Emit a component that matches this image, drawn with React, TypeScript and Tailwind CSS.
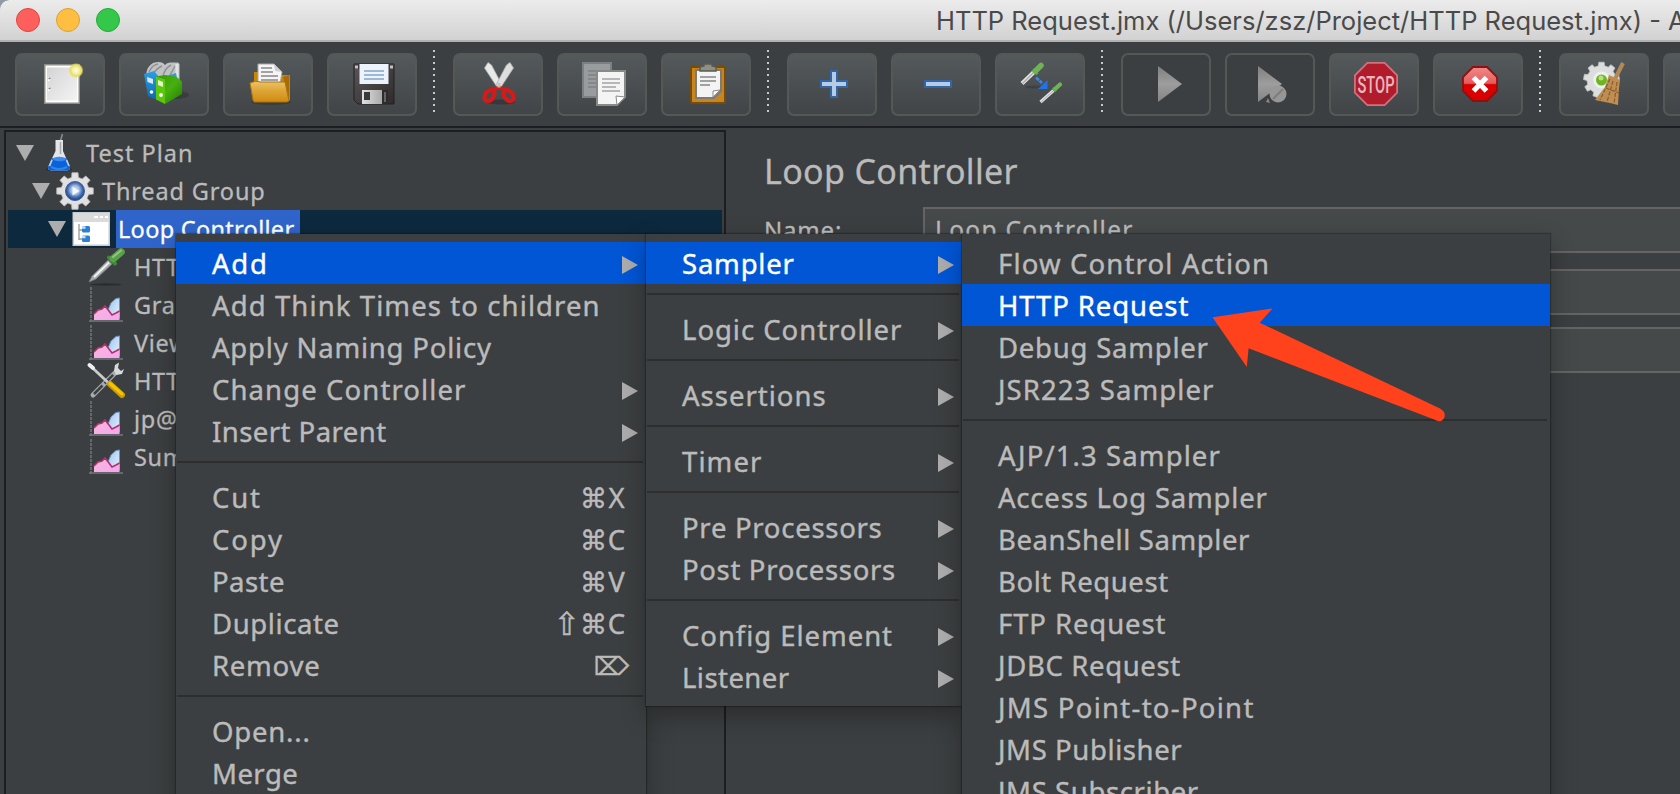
import type { ReactNode } from 'react';

const Svg = ({ s, children }: { s: number; children: ReactNode }) => (
  <svg width={s} height={s} viewBox={`0 0 ${s} ${s}`} className="block shrink-0 overflow-visible">
    {children}
  </svg>
);

/* ---------- gradients shared by the icons ---------- */
const Defs = () => (
  <svg width="0" height="0" className="absolute">
    <defs>
      <linearGradient id="page" x1="0" y1="0" x2="1" y2="1">
        <stop offset="0" stopColor="#d4d4d4" />
        <stop offset="1" stopColor="#f4f4f4" />
      </linearGradient>
      <radialGradient id="glow">
        <stop offset="0" stopColor="#fffef0" />
        <stop offset="0.5" stopColor="#f3ec9a" />
        <stop offset="0.75" stopColor="#e8df5a" />
        <stop offset="1" stopColor="#e8df5a" stopOpacity="0.1" />
      </radialGradient>
      <linearGradient id="folder" x1="0" y1="0" x2="0" y2="1">
        <stop offset="0" stopColor="#ecc46a" />
        <stop offset="0.45" stopColor="#dda637" />
        <stop offset="1" stopColor="#d08a0c" />
      </linearGradient>
      <linearGradient id="blueBook" x1="0" y1="0" x2="0" y2="1">
        <stop offset="0" stopColor="#2b9fe6" />
        <stop offset="1" stopColor="#0b68b4" />
      </linearGradient>
      <linearGradient id="greenBook" x1="0" y1="0" x2="1" y2="1">
        <stop offset="0" stopColor="#2f9a05" />
        <stop offset="0.5" stopColor="#48b010" />
        <stop offset="1" stopColor="#1f7a02" />
      </linearGradient>
      <linearGradient id="gray" x1="0" y1="0" x2="0" y2="1">
        <stop offset="0" stopColor="#7f7f7f" />
        <stop offset="0.5" stopColor="#9d9d9d" />
        <stop offset="1" stopColor="#858585" />
      </linearGradient>
      <linearGradient id="disk" x1="0" y1="0" x2="1" y2="1">
        <stop offset="0" stopColor="#5a5556" />
        <stop offset="1" stopColor="#2f2b2d" />
      </linearGradient>
      <linearGradient id="metal" x1="0" y1="0" x2="1" y2="0">
        <stop offset="0" stopColor="#e0e0e0" />
        <stop offset="1" stopColor="#a9a9a9" />
      </linearGradient>
      <linearGradient id="redX" x1="0" y1="0" x2="0" y2="1">
        <stop offset="0" stopColor="#f08a8a" />
        <stop offset="0.48" stopColor="#e85a5a" />
        <stop offset="0.52" stopColor="#d80000" />
        <stop offset="1" stopColor="#d80000" />
      </linearGradient>
      <radialGradient id="hub" cx="0.5" cy="0.45">
        <stop offset="0" stopColor="#dfe9f6" />
        <stop offset="0.45" stopColor="#a5bce0" />
        <stop offset="0.75" stopColor="#4a72b4" />
        <stop offset="1" stopColor="#234a8e" />
      </radialGradient>
      <linearGradient id="sky" x1="0" y1="0" x2="1" y2="1">
        <stop offset="0" stopColor="#9cc4f0" />
        <stop offset="1" stopColor="#e6f1fd" />
      </linearGradient>
      <linearGradient id="pink" x1="0" y1="0" x2="1" y2="1">
        <stop offset="0" stopColor="#f7b8dc" />
        <stop offset="1" stopColor="#f5a6f0" />
      </linearGradient>
      <linearGradient id="broom" x1="0" y1="0" x2="1" y2="1">
        <stop offset="0" stopColor="#b98a52" />
        <stop offset="1" stopColor="#c49050" />
      </linearGradient>
    </defs>
  </svg>
);

const gearPath = (cx: number, cy: number, ro: number, ri: number, n: number) => {
  const pts: string[] = [];
  for (let i = 0; i < n; i++) {
    const a = (i / n) * Math.PI * 2 - Math.PI / 2;
    const w = Math.PI / n;
    [
      [-0.62, ri],
      [-0.42, ro],
      [0.42, ro],
      [0.62, ri],
    ].forEach(([o, r]) => pts.push(`${(cx + r * Math.cos(a + o * w)).toFixed(2)},${(cy + r * Math.sin(a + o * w)).toFixed(2)}`));
  }
  return pts.join(' ');
};

/* ---------- toolbar icons ---------- */
const icons: Record<string, ReactNode> = {
  new: (
    <Svg s={44}>
      <rect x="5" y="2" width="36" height="40" fill="#8b8c85" />
      <rect x="6.5" y="3.5" width="33" height="37" fill="#fff" />
      <rect x="8" y="5.5" width="30" height="33" fill="url(#page)" />
      <path d="M9 15l3 2.500l-3 2M9 25l3 2.500l-3 2" fill="#fff" />
      <path d="M9.500 16.500h2M9.500 26.500h2" stroke="#7d7d7d" strokeWidth="1.500" />
      <circle cx="37" cy="8.500" r="7.500" fill="url(#glow)" />
    </Svg>
  ),
  templates: (
    <Svg s={44}>
      <ellipse cx="33" cy="33" rx="13" ry="4" fill="#2c2f30" opacity="0.5" />
      <path d="M3 13Q4 4 10 1Q16 -1 20 1L22 3Q24 0 28 0.500L35 0.500L36.500 2V18H10Z" fill="#c0c2c3" />
      <path d="M6 10Q9 3 15 2M10 12Q14 6 19 4M20 14Q22 6 28 3M26 15L32 4" stroke="#8d9092" strokeWidth="1.400" fill="none" />
      <path d="M34 2V16" stroke="#dfe2e3" strokeWidth="3" />
      <path d="M1 12L11 9L16 15L14 38L5 34Z" fill="url(#blueBook)" />
      <path d="M24 14L33 11L34 16L26 17Z" fill="#2f9be0" />
      <path d="M4 15L10 17V22L4.500 20Z" fill="#d5e9f8" />
      <circle cx="8.500" cy="30" r="1.800" fill="#fff" />
      <path d="M13 14.500L22 13L33 14.500L39 19.500V32L22 42V18Z" fill="url(#greenBook)" />
      <path d="M13 14.500L22 18V42L13 37.500Z" fill="#5cc80a" />
      <path d="M15 18L20 20V25L15 23Z" fill="#e3f5cc" />
      <circle cx="18" cy="33" r="1.900" fill="#fff" />
    </Svg>
  ),
  open: (
    <Svg s={44}>
      <ellipse cx="24" cy="40" rx="20" ry="3" fill="#2c2f30" opacity="0.500" />
      <path d="M7 10H16V13H43V38L40 40L7 30Z" fill="#c8850a" />
      <path d="M36 15L42 13V37Z" fill="#a86b05" />
      <path d="M11 2H27L35 10L33 22H11Z" fill="#f5f5f5" stroke="#a9a9a9" />
      <path d="M27 2L28 9L35 10Z" fill="#cfcfcf" />
      <path d="M14 6H25M14 10H26M14 14H31M14 18H31" stroke="#a3a3a3" strokeWidth="1.800" />
      <path d="M3 21Q9 18 14 20H38L42 39L40 40H7L6 38Z" fill="url(#folder)" stroke="#a9730f" />
    </Svg>
  ),
  save: (
    <Svg s={44}>
      <path d="M3 2H43V42H7L3 38Z" fill="url(#disk)" stroke="#242123" />
      <path d="M3 2H43V7H3Z" fill="#3d393b" />
      <rect x="4" y="3.500" width="3" height="3" fill="#c3c3c3" />
      <rect x="39" y="3.500" width="3" height="3" fill="#c3c3c3" />
      <rect x="8.500" y="2" width="29" height="20" fill="#edf3fa" />
      <path d="M13 9H33M13 13H33M13 17H33" stroke="#9db8d4" strokeWidth="2" />
      <rect x="11" y="28" width="26" height="14" fill="#2e2b2c" />
      <rect x="11" y="28" width="20" height="14" fill="url(#metal)" />
      <rect x="13" y="30" width="6" height="8" fill="#38393b" />
      <path d="M34 30V40" stroke="#686466" strokeWidth="2" />
    </Svg>
  ),
  cut: (
    <Svg s={44}>
      <ellipse cx="24" cy="40" rx="14" ry="2.500" fill="#2c2f30" opacity="0.600" />
      <path d="M7.500 6L11 0.500L14.500 3L25 23L23 27L20 25Z" fill="#e8e8e8" stroke="#aeb0b0" strokeWidth="0.800" />
      <path d="M36.500 6L33 0.500L29.500 3L19 23L21 27L24 25Z" fill="#dedede" stroke="#aeb0b0" strokeWidth="0.800" />
      <ellipse cx="12.500" cy="33.500" rx="4.200" ry="6.200" transform="rotate(38 12.500 33.500)" fill="none" stroke="#d61a1a" strokeWidth="4.200" />
      <ellipse cx="31.500" cy="33.500" rx="4.200" ry="6.200" transform="rotate(-38 31.500 33.500)" fill="none" stroke="#d61a1a" strokeWidth="4.200" />
      <path d="M15 27.500L22 25.500L29 27.500" stroke="#d61a1a" strokeWidth="3.500" fill="none" />
      <rect x="20.500" y="21" width="3" height="4.500" fill="#c4c4c4" />
    </Svg>
  ),
  copy: (
    <Svg s={44}>
      <rect x="2" y="1" width="28" height="34" fill="#999c9e" stroke="#7c8082" strokeWidth="2" />
      <path d="M7 9H24M7 13H24M7 17H24M7 21H24M7 25H24" stroke="#7e8183" strokeWidth="1.500" />
      <path d="M16 9H44V35L36 43H16Z" fill="#f4f4f4" stroke="#888a85" strokeWidth="2" />
      <path d="M44 35L36 43L35 34Z" fill="#fff" stroke="#888a85" strokeWidth="1" />
      <path d="M21 17H39M21 21H39M21 25H35M21 29H39" stroke="#b7b7b7" strokeWidth="1.800" />
    </Svg>
  ),
  paste: (
    <Svg s={44}>
      <rect x="6" y="5" width="34" height="36" rx="1" fill="#c68520" stroke="#7a4b06" strokeWidth="2" />
      <path d="M11 8H36V29L29 36H11Z" fill="#f3f3f3" stroke="#7d7a72" strokeWidth="2" />
      <path d="M35 28L28 35L28 29Z" fill="#fff" stroke="#8a8a88" strokeWidth="1" />
      <path d="M15 15H31M15 19H31M15 23H25" stroke="#a2a2a2" strokeWidth="2" />
      <path d="M15 9V5L19 4V2H27V4L31 5V9Z" fill="#8e9083" stroke="#595b52" strokeWidth="1.400" />
    </Svg>
  ),
  plus: (
    <Svg s={44}>
      <path d="M20 9H26V19H36V25H26V35H20V25H10V19H20Z" fill="#b5cbe6" stroke="#3465a4" strokeWidth="2" />
    </Svg>
  ),
  minus: (
    <Svg s={44}>
      <rect x="10" y="19" width="26" height="6" fill="#b5cbe6" stroke="#3465a4" strokeWidth="2" />
    </Svg>
  ),
  toggle: (
    <Svg s={44}>
      <ellipse cx="16" cy="25" rx="10" ry="1.500" fill="#2c2f30" opacity="0.400" />
      <path d="M3 21.500L15 10" stroke="#e2e2e2" strokeWidth="4.200" />
      <path d="M3.500 21.500L15 10" stroke="#a5a8a9" strokeWidth="1.200" />
      <path d="M13.500 7.500L18.500 12.500" stroke="#4f9a45" strokeWidth="3" />
      <path d="M16.500 9L22 3.500" stroke="#6fb356" strokeWidth="5.500" strokeLinecap="round" />
      <path d="M17 15.500L23 21" stroke="#3d86e8" strokeWidth="2.800" strokeDasharray="4 0.800" />
      <path d="M28.500 18V27H19Z" fill="#1f74ea" />
      <path d="M21.500 40L34.500 28.500" stroke="#e2e2e2" strokeWidth="3.200" />
      <path d="M22 40L34.500 28.500" stroke="#a5a8a9" strokeWidth="1" />
      <path d="M33.500 26L37 29.500" stroke="#4f9a45" strokeWidth="2.500" />
      <path d="M36 27L41 22.500" stroke="#6fb356" strokeWidth="4.200" strokeLinecap="round" />
    </Svg>
  ),
  play: (
    <Svg s={44}>
      <path d="M13 4L37 22L13 40Z" fill="url(#gray)" />
    </Svg>
  ),
  playNow: (
    <Svg s={44}>
      <path d="M9 4L33 22L9 40Z" fill="url(#gray)" />
      <circle cx="29" cy="32" r="8.500" fill="#969696" />
      <path d="M24 37L34 27" stroke="#7d7d7d" strokeWidth="2" />
      <path d="M17 40l2-4l2 5Z" fill="#868686" />
    </Svg>
  ),
  stop: (
    <Svg s={44}>
      <path d="M14 0H32L45 13V31L32 44H14L1 31V13Z" fill="#d0737c" />
      <path d="M14.700 1.800H31.300L43.200 13.700V30.300L31.300 42.200H14.700L2.800 30.300V13.700Z" fill="#b01c2b" />
      <text
        x="23"
        y="30.500"
        textAnchor="middle"
        textLength="37"
        lengthAdjust="spacingAndGlyphs"
        fontFamily="Roboto, sans-serif"
        fontWeight="500"
        fontSize="23"
        fill="#eab6bb"
      >
        STOP
      </text>
    </Svg>
  ),
  shutdown: (
    <Svg s={44}>
      <path d="M16 5H30L40 15V29L30 39H16L6 29V15Z" fill="url(#redX)" stroke="#8c1212" strokeWidth="1.800" />
      <path d="M16.500 15.500L29.500 29M29.500 15.500L16.500 29" stroke="#fff" strokeWidth="5.200" />
    </Svg>
  ),
  clear: (
    <Svg s={44}>
      <polygon points={gearPath(18.5, 18, 18, 14.5, 9)} fill="#dcdddd" stroke="#c2c3c3" strokeWidth="0.800" />
      <circle cx="18.500" cy="18" r="8.500" fill="#efefef" />
      <circle cx="18.500" cy="18" r="5.500" fill="#6cb521" />
      <circle cx="18" cy="16" r="2.500" fill="#b2e27c" />
      <path d="M40 1L32 17" stroke="#b08a5a" strokeWidth="4" />
      <path d="M26 13L37 18L36 26L35 43L27 41L12 38L22 25Z" fill="url(#broom)" />
      <path d="M27 17L17 38M30 19L24 40M34 20L31 42M23 26L36 31" stroke="#855f33" strokeWidth="1.200" strokeDasharray="4 1.500" />
    </Svg>
  ),
};

const ToolButton = ({ icon, disabled }: { icon: string; disabled?: boolean }) => (
  <div
    className={
      'flex h-[63px] w-[90px] shrink-0 items-start justify-center rounded-[7px] border-2 border-[#565856] pl-0.5 pt-[7px] ' +
      (disabled ? '' : 'bg-linear-to-b from-[#54595b] to-[#414547]')
    }
  >
    {icons[icon]}
  </div>
);

const ToolSeparator = () => (
  <div className="flex w-9 shrink-0 flex-col gap-1 pl-4">
    {Array.from({ length: 11 }, (_, i) => (
      <div key={i} className="size-0.5 bg-[#c6c8c9]" />
    ))}
  </div>
);

/* ---------- tree icons ---------- */
const Graph = () => (
  <Svg s={38}>
    <path d="M3 1V36" stroke="#6a6c6d" strokeWidth="1.800" strokeDasharray="3 1" />
    <path d="M1 35H35" stroke="#75777a" strokeWidth="1.500" />
    <path d="M20 24L23 17L28 12.500L31.500 12V32H24Z" fill="url(#sky)" stroke="#6b90cc" strokeWidth="1" />
    <path d="M6 34V28L10 24L14 23L17 20L21 25L24 29L28 27L31.500 25V34Z" fill="url(#pink)" />
    <path d="M6 28L10 24L14 23L17 20L21 25L24 29L28 27L31.500 25" fill="none" stroke="#b5306a" strokeWidth="1.600" />
  </Svg>
);

const treeIcons: Record<string, ReactNode> = {
  flask: (
    <Svg s={38}>
      <ellipse cx="19" cy="35.500" rx="13" ry="2" fill="#25282a" opacity="0.700" />
      <path d="M20 8L22.500 0" stroke="#8a8c8e" strokeWidth="1.500" />
      <path d="M15.500 6H23V17L30 33Q30.500 36 27 36.500H11Q7.500 36 8 33L15.500 17Z" fill="#e3e6e9" />
      <path d="M12.500 24H26L30 33Q30.500 36 27 36.500H11Q7.500 36 8 33Z" fill="#0a62d8" />
      <ellipse cx="19.300" cy="25" rx="6.800" ry="2.200" fill="#3b8cf0" />
      <path d="M9.500 32L12 26M29 32L26.500 26" stroke="#a9cdf8" strokeWidth="1.800" />
      <path d="M11 33Q19 37 27 33" stroke="#2f86f2" strokeWidth="2" fill="none" />
      <path d="M20.500 8V20" stroke="#a6abb0" strokeWidth="1.500" />
    </Svg>
  ),
  gear: (
    <Svg s={38}>
      <polygon points={gearPath(19, 19, 18.5, 14, 8)} fill="#e1e1e1" stroke="#bdbdbd" strokeWidth="0.800" strokeLinejoin="round" />
      <circle cx="19" cy="19" r="9.500" fill="url(#hub)" stroke="#3c5f9f" />
      <path d="M16.500 14.500L23.500 19L16.500 23.500Z" fill="#f4f7fb" />
    </Svg>
  ),
  loop: (
    <Svg s={38}>
      <rect x="0.500" y="2" width="37.500" height="34" fill="#c9c9c9" />
      <rect x="1.500" y="3" width="35.500" height="9.500" fill="#dadada" />
      <path d="M22 7H26M28 7H31M33 7H36" stroke="#fff" strokeWidth="2" />
      <rect x="2" y="12" width="34.500" height="22.500" fill="#fff" />
      <path d="M7 14V30M7 20H10M7 29H10" stroke="#9a9a9a" strokeWidth="1.300" fill="none" />
      <rect x="10" y="16" width="8" height="6.500" rx="1.500" fill="#2d7fd0" />
      <rect x="10" y="25.500" width="8" height="6.500" rx="1.500" fill="#2d7fd0" />
      <path d="M10 17.500H13.500M10 27H13.500" stroke="#c4e0f7" strokeWidth="2.500" />
    </Svg>
  ),
  dropper: (
    <Svg s={38}>
      <ellipse cx="18" cy="36.500" rx="16" ry="1.200" fill="#2a2d2f" />
      <path d="M1 34L4 28L20 12L24 16L8 31Z" fill="#a9acae" stroke="#75797b" strokeWidth="0.800" />
      <path d="M6 29L21 14.500" stroke="#f1f1f1" strokeWidth="1.800" />
      <path d="M21 9.500L27 15.500" stroke="#3f8a38" strokeWidth="4" strokeLinecap="round" />
      <path d="M25.500 10.500L33 4" stroke="#58a04a" strokeWidth="7.500" strokeLinecap="round" />
      <path d="M25 9L33 2.500" stroke="#8cc878" strokeWidth="2" strokeLinecap="round" />
    </Svg>
  ),
  graph: <Graph />,
  tools: (
    <Svg s={38}>
      <path d="M5 33L29 9" stroke="#a7a9aa" strokeWidth="5" strokeLinecap="round" />
      <path d="M6 32L28 10" stroke="#3c3f41" strokeWidth="2.600" strokeDasharray="12 3" />
      <path d="M26 9L27 3L31 0.500L30 6L33 9L36 7L34 12L28 13Z" fill="#d8d9da" />
      <path d="M2 3.500L20 20.500" stroke="#c9cbcc" strokeWidth="2.800" strokeLinecap="round" />
      <path d="M1.500 3L5 6" stroke="#f0f0f0" strokeWidth="4" strokeLinecap="round" />
      <path d="M22 22L34 33" stroke="#c99a00" strokeWidth="6" strokeLinecap="round" />
      <path d="M22 21.500L34 32" stroke="#f5c400" strokeWidth="3.200" strokeLinecap="round" />
    </Svg>
  ),
};

const Chevron = () => (
  <svg width="18" height="16" viewBox="0 0 18 16" className="mr-1.5 block shrink-0">
    <path d="M0 0H18L9 16Z" fill="#adadad" />
  </svg>
);

const treeRows = [
  { pad: 'pl-2', icon: 'flask', text: 'Test Plan', open: true, track: 'tracking-[1px]' },
  { pad: 'pl-6', icon: 'gear', text: 'Thread Group', open: true, track: 'tracking-[0.85px]' },
  { pad: 'pl-10', icon: 'loop', text: 'Loop Controller', open: true, selected: true, track: 'tracking-[0.3px]' },
  { pad: 'pl-20', icon: 'dropper', text: 'HTTP Request' },
  { pad: 'pl-20', icon: 'graph', text: 'Graph Results' },
  { pad: 'pl-20', icon: 'graph', text: 'View Results Tree' },
  { pad: 'pl-20', icon: 'tools', text: 'HTTP Header Manager' },
  { pad: 'pl-20', icon: 'graph', text: 'jp@gc - Transactions per Second' },
  { pad: 'pl-20', icon: 'graph', text: 'Summary Report' },
];

/* ---------- menus ---------- */
type Item = { label: string; track?: string; sub?: boolean; keys?: string; active?: boolean } | null;

const addMenu: Item[] = [
  { label: 'Add', sub: true, active: true, track: 'tracking-[1.8px]' },
  { label: 'Add Think Times to children' },
  { label: 'Apply Naming Policy', track: 'tracking-[0.8px]' },
  { label: 'Change Controller', sub: true },
  { label: 'Insert Parent', sub: true, track: 'tracking-[0.45px]' },
  null,
  { label: 'Cut', keys: '⌘X', track: 'tracking-[1.8px]' },
  { label: 'Copy', keys: '⌘C', track: 'tracking-[1.9px]' },
  { label: 'Paste', keys: '⌘V', track: 'tracking-[0.45px]' },
  { label: 'Duplicate', keys: '⇧⌘C', track: 'tracking-[0.6px]' },
  { label: 'Remove', keys: '⌦', track: 'tracking-[0.75px]' },
  null,
  { label: 'Open...', track: 'tracking-[0.8px]' },
  { label: 'Merge', track: 'tracking-[0.45px]' },
];

const typeMenu: Item[] = [
  { label: 'Sampler', sub: true, active: true, track: 'tracking-[0.8px]' },
  null,
  { label: 'Logic Controller', sub: true, track: 'tracking-[0.97px]' },
  null,
  { label: 'Assertions', sub: true, track: 'tracking-[1px]' },
  null,
  { label: 'Timer', sub: true },
  null,
  { label: 'Pre Processors', sub: true, track: 'tracking-[0.72px]' },
  { label: 'Post Processors', sub: true, track: 'tracking-[0.67px]' },
  null,
  { label: 'Config Element', sub: true, track: 'tracking-[0.95px]' },
  { label: 'Listener', sub: true, track: 'tracking-[0.45px]' },
];

const samplerMenu: Item[] = [
  { label: 'Flow Control Action', track: 'tracking-[1.15px]' },
  { label: 'HTTP Request', active: true, track: 'tracking-[0.9px]' },
  { label: 'Debug Sampler', track: 'tracking-[0.77px]' },
  { label: 'JSR223 Sampler' },
  null,
  { label: 'AJP/1.3 Sampler' },
  { label: 'Access Log Sampler', track: 'tracking-[0.8px]' },
  { label: 'BeanShell Sampler', track: 'tracking-[0.6px]' },
  { label: 'Bolt Request', track: 'tracking-[0.57px]' },
  { label: 'FTP Request', track: 'tracking-[0.9px]' },
  { label: 'JDBC Request', track: 'tracking-[0.65px]' },
  { label: 'JMS Point-to-Point', track: 'tracking-[1.28px]' },
  { label: 'JMS Publisher', track: 'tracking-[0.6px]' },
  { label: 'JMS Subscriber', track: 'tracking-[0.6px]' },
];

const Shortcut = ({ keys }: { keys: string }) => (
  <div className={'flex items-center ' + (keys === '⌦' ? 'mr-[9px]' : 'mr-[12px]')}>
    {[...keys].map((k, i) =>
      k === '⌦' ? (
        <span key={i} className="font-['DejaVu_Sans',sans-serif] text-[25px] leading-none tracking-normal">
          {k}
        </span>
      ) : k === '⇧' ? (
        <span key={i} className="font-['DejaVu_Sans',sans-serif] text-[32px] leading-none tracking-normal">
          {k}
        </span>
      ) : k === '⌘' ? (
        <span key={i} className="font-['DejaVu_Sans',sans-serif] text-[27px] leading-none">
          {k}
        </span>
      ) : (
        <span key={i} className="w-[19px] text-center tracking-normal">
          {k}
        </span>
      ),
    )}
  </div>
);

const Menu = ({ items, className }: { items: Item[]; className: string }) => (
  <div
    className={
      "absolute top-[234px] bg-[#3c3f41] py-2 font-['Noto_Sans',sans-serif] text-[27.5px] text-[#bbbbbb] shadow-[0_0_1px_1px_rgba(0,0,0,0.25),0_10px_24px_rgba(0,0,0,0.3)] [-webkit-text-stroke:0.4px] " +
      className
    }
  >
    {items.map((it, i) =>
      it ? (
        <div
          key={i}
          className={
            'flex h-[42px] items-center justify-between whitespace-nowrap pl-9 pr-2 pt-0.5 leading-[40px] ' +
            (it.active ? 'bg-[#0156d6] text-white' : '')
          }
        >
          <span className={it.track ?? 'tracking-[1.1px]'}>{it.label}</span>
          {it.sub && (
            <svg width="16" height="18" viewBox="0 0 16 18" className="mt-0.5 block shrink-0">
              <path d="M0 0L16 9L0 18Z" fill="#adadad" />
            </svg>
          )}
          {it.keys && <Shortcut keys={it.keys} />}
        </div>
      ) : (
        <div key={i} className="h-6 pl-px pr-[3px] pt-[9px]">
          <div className="h-0.5 bg-[#2e2e2e]" />
        </div>
      ),
    )}
  </div>
);

export default function App() {
  return (
    <div className="relative h-[794px] w-[1680px] overflow-hidden bg-[#8f9aa6]">
      <Defs />
      <div className="flex h-full flex-col overflow-hidden rounded-tl-[9px] bg-[#3c3f41]">
        {/* title bar */}
        <div className="flex h-[42px] shrink-0 items-center border-b-2 border-[#b1b1b1] bg-linear-to-b from-[#ececec] to-[#d2d2d2] pl-4">
          <div className="flex gap-4">
            <div className="size-6 rounded-full border border-[#e0443e] bg-[#fd605c]" />
            <div className="size-6 rounded-full border border-[#dea035] bg-[#fdbe41]" />
            <div className="size-6 rounded-full border border-[#27a838] bg-[#34c84a]" />
          </div>
          <div className="ml-[816px] whitespace-nowrap pt-0.5 font-['Inter',sans-serif] text-[25.5px] leading-none text-[#4a4a4a]">
            HTTP Request.jmx (/Users/zsz/Project/HTTP Request.jmx) - Apache JMeter
          </div>
        </div>

        {/* toolbar */}
        <div className="flex h-[86px] shrink-0 border-b-2 border-[#1d1e20] pl-[15px] pt-2">
          <div className="flex gap-3.5 pt-[3px]">
            <ToolButton icon="new" />
            <ToolButton icon="templates" />
            <ToolButton icon="open" />
            <ToolButton icon="save" />
          </div>
          <ToolSeparator />
          <div className="flex gap-3.5 pt-[3px]">
            <ToolButton icon="cut" />
            <ToolButton icon="copy" />
            <ToolButton icon="paste" />
          </div>
          <ToolSeparator />
          <div className="flex gap-3.5 pt-[3px]">
            <ToolButton icon="plus" />
            <ToolButton icon="minus" />
            <ToolButton icon="toggle" />
          </div>
          <ToolSeparator />
          <div className="flex gap-3.5 pt-[3px]">
            <ToolButton icon="play" disabled />
            <ToolButton icon="playNow" disabled />
            <ToolButton icon="stop" />
            <ToolButton icon="shutdown" />
          </div>
          <ToolSeparator />
          <div className="flex gap-3.5 pt-[3px]">
            <ToolButton icon="clear" />
            <ToolButton icon="clear" />
          </div>
        </div>

        {/* body */}
        <div className="flex min-h-0 flex-1 pl-1 pt-0.5 font-['Noto_Sans',sans-serif] text-[#bbbbbb] [-webkit-text-stroke:0.3px]">
          <div className="w-[722px] shrink-0 overflow-hidden border-2 border-b-0 border-[#1d1e20] px-0.5 pt-0.5 text-[23.5px]">
            {treeRows.map((r, i) => (
              <div key={i} className={'flex h-[38px] items-center whitespace-nowrap ' + r.pad + (r.selected ? ' bg-[#0d293e]' : '')}>
                {r.open && <Chevron />}
                {treeIcons[r.icon]}
                <div
                  className={
                    'ml-1.5 h-[38px] px-0.5 leading-[38px] ' +
                    (r.track ?? 'tracking-[0.7px]') +
                    (r.selected ? ' w-[184px] bg-[#2f65ca] text-white' : '')
                  }
                >
                  {r.text}
                </div>
              </div>
            ))}
          </div>

          <div className="flex min-w-0 flex-1 flex-col pl-[38px] pt-[18px]">
            <div className="text-[34px] leading-[46px] tracking-[0.35px]">Loop Controller</div>
            <div className="mt-[13px] flex">
              <div className="w-[159px] text-[24px] leading-[46px] tracking-[0.8px]">Name:</div>
              <div className="h-[46px] flex-1 border-2 border-r-0 border-[#646464] bg-[#454949] pl-2.5 text-[24.5px] leading-[42px] tracking-[1.3px]">
                Loop Controller
              </div>
            </div>
            <div className="mt-4 h-[46px] border-2 border-r-0 border-[#646464] bg-[#454949]" />
            <div className="mt-3 h-[46px] border-2 border-r-0 border-[#646464] bg-[#454949]" />
          </div>
        </div>
      </div>

      <Menu items={addMenu} className="left-[176px] w-[470px]" />
      <Menu items={typeMenu} className="left-[646px] w-[316px]" />
      <Menu items={samplerMenu} className="left-[962px] w-[588px]" />

      <svg className="absolute left-[1200px] top-[300px]" width="260" height="130" viewBox="1200 300 260 130">
        <path d="M1212.500 317.300L1272.500 308.500L1259.700 322.700L1440 408.500Q1446 412 1444.500 417Q1442 422.500 1438 421L1248.600 348.300L1246.800 367Z" fill="#ff421c" />
      </svg>
    </div>
  );
}
